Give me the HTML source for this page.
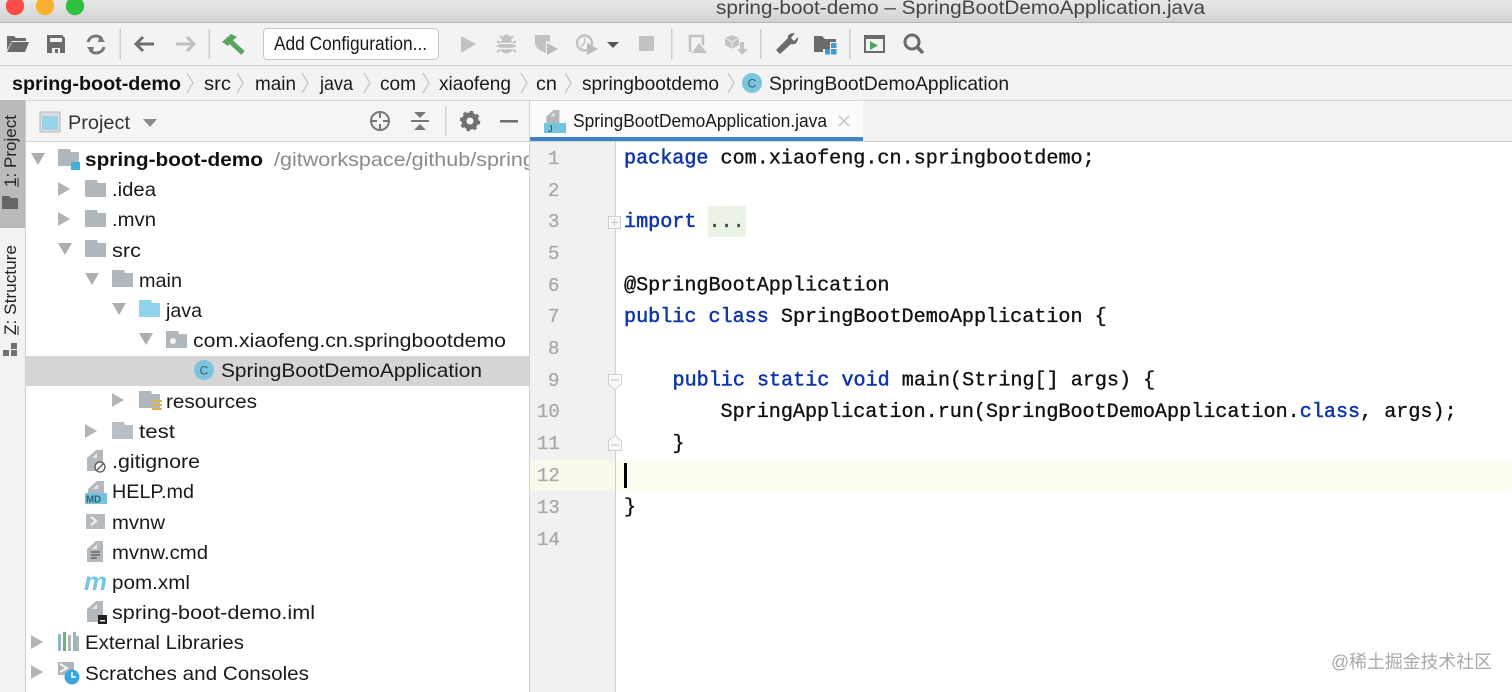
<!DOCTYPE html>
<html><head><meta charset="utf-8"><style>
html,body{margin:0;padding:0;background:#fff;overflow:hidden}
svg{display:block}
text{font-family:"Liberation Sans",sans-serif;font-size:19.5px;fill:#1a1a1a;white-space:pre}
.m{font-family:"Liberation Mono",monospace;font-size:20.13px;fill:#111;font-weight:400;stroke:#111;stroke-width:.35px}
.k{fill:#0e35a8;stroke:#0e35a8;stroke-width:.5px}
.n{font-family:"Liberation Mono",monospace;font-size:19px;fill:#a8a8a8;stroke:#a8a8a8;stroke-width:.3px}
.b{font-weight:700;fill:#111}
</style></head><body>
<svg width="1512" height="692" viewBox="0 0 1512 692" xmlns="http://www.w3.org/2000/svg">
<defs>
<linearGradient id="tg" x1="0" y1="0" x2="0" y2="1"><stop offset="0" stop-color="#e9e9e9"/><stop offset="1" stop-color="#d2d2d2"/></linearGradient>
<symbol id="fold" viewBox="0 0 21 17" overflow="visible"><path d="M0 0H12L13 3H21V17H0Z"/></symbol>
<symbol id="tri" viewBox="0 0 14 14" overflow="visible"><path d="M0 0H14L7 12Z" fill="#aeaeae"/></symbol>
<symbol id="trr" viewBox="0 0 14 14" overflow="visible"><path d="M0 0L12 7L0 14Z" fill="#b4b4b4"/></symbol>
<symbol id="doc" viewBox="0 0 20 22" overflow="visible"><path d="M0 8L9 0H16V21H0Z" fill="#b3b8bc"/><path d="M5 8L10 3V8Z" fill="#e8e8e8"/></symbol>
</defs>

<!-- backgrounds -->
<rect width="1512" height="692" fill="#fff"/>
<rect width="1512" height="22" fill="url(#tg)"/>
<rect y="22" width="1512" height="1" fill="#b5b5b5"/>
<rect y="23" width="1512" height="77" fill="#f3f3f3"/>
<rect y="65" width="1512" height="1" fill="#d4d4d4"/>
<rect y="100" width="1512" height="1" fill="#d4d4d4"/>
<rect y="101" width="25" height="591" fill="#f2f2f2"/>
<rect y="100" width="25" height="128" fill="#bababa"/>
<rect x="25" y="100" width="1" height="592" fill="#cfcfcf"/>
<rect x="26" y="101" width="503" height="40" fill="#f5f5f5"/>
<rect x="26" y="141" width="503" height="1" fill="#d6d6d6"/>
<rect x="26" y="356" width="503" height="30" fill="#d5d5d5"/>

<!-- traffic lights -->
<circle cx="15" cy="6" r="9.200" fill="#fb4c4a"/>
<circle cx="45" cy="6" r="9.200" fill="#f9b02e"/>
<circle cx="75" cy="6" r="9.200" fill="#2fc13f"/>
<text x="716" y="14" textLength="489" lengthAdjust="spacingAndGlyphs" style="fill:#444">spring-boot-demo – SpringBootDemoApplication.java</text>

<!-- toolbar left -->
<path d="M7 36H14L16 38H26V41H12L7 50ZM12 42H29L25 52H7Z" fill="#6b6b6b"/>
<path d="M47 35H62L65 38V53H47Z" fill="#6b6b6b"/><rect x="50" y="38" width="12" height="4" fill="#f3f3f3"/><rect x="52" y="48" width="8" height="5" fill="#f3f3f3"/><rect x="55" y="49" width="3" height="4" fill="#6b6b6b"/>
<path d="M88 42A8 8 0 0 1 102 39M104 47A8 8 0 0 1 90 50" fill="none" stroke="#777" stroke-width="3"/><path d="M100 35L105 42H98ZM92 54L87 47H94Z" fill="#777"/>
<rect x="119.500" y="29" width="1.500" height="30" fill="#cfcfcf"/>
<path d="M154 44H136M143 37L136 44L143 51" fill="none" stroke="#6e6e6e" stroke-width="3"/>
<path d="M176 44H194M187 37L194 44L187 51" fill="none" stroke="#c0c0c0" stroke-width="3"/>
<rect x="208.500" y="29" width="1.500" height="30" fill="#cfcfcf"/>
<path d="M222 42L231 34L237 37L232 41L228 46Z" fill="#58a55c"/><path d="M231 42L243 53" stroke="#58a55c" stroke-width="5"/>
<rect x="263.500" y="28.500" width="175" height="31" rx="4" fill="#fff" stroke="#c9c9c9"/>
<text x="274" y="50" textLength="153" lengthAdjust="spacingAndGlyphs">Add Configuration...</text>

<!-- toolbar gray -->
<path d="M461 36L476 44L461 53Z" fill="#c2c2c2"/>
<path d="M500 36L503 39M513 36L510 39" stroke="#c2c2c2" stroke-width="2"/>
<ellipse cx="506.500" cy="46" rx="7" ry="7.500" fill="#c2c2c2"/><circle cx="506.500" cy="39" r="4.500" fill="#c2c2c2"/>
<path d="M497 41L500 43M516 41L513 43M497 46H500M516 46H513M497 52L500 50M516 52L513 50" stroke="#c2c2c2" stroke-width="2"/>
<path d="M500 43.500H513M500 48.500H513" stroke="#f3f3f3" stroke-width="1.500"/>
<path d="M535 35H550V42L546 41V53L541 51C537 49 535 46 535 42Z" fill="#c2c2c2"/><path d="M547 43L558 49L547 55Z" fill="#bbb"/>
<circle cx="584.500" cy="43" r="7.500" fill="none" stroke="#c2c2c2" stroke-width="2.500"/><path d="M584.500 38V43L581 47" fill="none" stroke="#c2c2c2" stroke-width="1.500"/><path d="M587 43L598 49L587 55Z" fill="#bbb"/>
<path d="M607 42H619L613 48Z" fill="#555"/>
<rect x="639" y="36" width="15" height="15" fill="#c2c2c2"/>
<rect x="671" y="29" width="1.500" height="30" fill="#cfcfcf"/>
<path d="M690 52V36H703V45" fill="none" stroke="#c2c2c2" stroke-width="2.500"/><path d="M699 43L707 53H692Z" fill="#c2c2c2"/>
<path d="M725 38L732 35L739 38V45L732 49L725 45Z" fill="#c2c2c2"/><path d="M732 42V49M725 38L732 42L739 38" fill="none" stroke="#f3f3f3"/><path d="M740 42H744V49H748L742 55L737 49H740Z" fill="#c2c2c2"/>
<rect x="760" y="29" width="1.500" height="30" fill="#cfcfcf"/>
<path d="M776 50L788 38C787 35 790 33 795 33L791 38L794 41L798 37C798 43 795 45 791 44L780 54Z" fill="#6b6b6b"/>
<path d="M814 36H822L825 39H836V42H823V52H814Z" fill="#6b6b6b"/><rect x="823" y="42" width="7" height="7" fill="#6b6b6b"/>
<rect x="825" y="49" width="5" height="5.500" fill="#3d9ad1"/><rect x="831" y="49" width="5.500" height="5.500" fill="#3d9ad1"/><rect x="831" y="43" width="5.500" height="5" fill="#3d9ad1"/>
<rect x="849" y="29" width="1.500" height="30" fill="#cfcfcf"/>
<rect x="865" y="36" width="19" height="16" fill="none" stroke="#6b6b6b" stroke-width="2"/><rect x="864" y="35" width="21" height="4" fill="#6b6b6b"/><path d="M870 41L878 45.500L870 50Z" fill="#4fa65c"/>
<circle cx="912" cy="42" r="7" fill="none" stroke="#6b6b6b" stroke-width="3"/><path d="M917 47L923 53" stroke="#6b6b6b" stroke-width="3.500"/>

<!-- breadcrumbs -->
<g fill="none" stroke="#c6c6c6" stroke-width="1.300">
<path d="M187 73L193 83L187 93M237 73L243 83L237 93M302 73L308 83L302 93M364 73L370 83L364 93M423 73L429 83L423 93M521 73L527 83L521 93M565 73L571 83L565 93M728 73L734 83L728 93"/>
</g>
<text class="b" x="12" y="90" textLength="169" lengthAdjust="spacingAndGlyphs">spring-boot-demo</text>
<text x="204" y="90" textLength="27" lengthAdjust="spacingAndGlyphs">src</text>
<text x="255" y="90" textLength="41" lengthAdjust="spacingAndGlyphs">main</text>
<text x="320" y="90" textLength="33" lengthAdjust="spacingAndGlyphs">java</text>
<text x="380" y="90" textLength="36" lengthAdjust="spacingAndGlyphs">com</text>
<text x="439" y="90" textLength="72" lengthAdjust="spacingAndGlyphs">xiaofeng</text>
<text x="536" y="90" textLength="21" lengthAdjust="spacingAndGlyphs">cn</text>
<text x="582" y="90" textLength="137" lengthAdjust="spacingAndGlyphs">springbootdemo</text>
<circle cx="752" cy="83" r="10" fill="#7cc5de"/>
<text x="752" y="87.500" text-anchor="middle" style="font-size:12px;fill:#3d5a68">C</text>
<text x="769" y="90" textLength="240" lengthAdjust="spacingAndGlyphs">SpringBootDemoApplication</text>

<!-- side tabs -->
<text transform="translate(16,187) rotate(-90)" textLength="72" lengthAdjust="spacingAndGlyphs" style="font-size:17px;fill:#222">1: Project</text>
<rect x="17.500" y="178" width="1" height="9" fill="#222"/>
<path d="M2 196H9L11 198H18V209H2Z" fill="#666"/>
<text transform="translate(16,335) rotate(-90)" textLength="90" lengthAdjust="spacingAndGlyphs" style="font-size:17px;fill:#222">Z: Structure</text>
<rect x="17.500" y="326" width="1" height="9" fill="#222"/>
<g fill="#6e7275"><rect x="3" y="350" width="6" height="6"/><rect x="11" y="343" width="6" height="6"/><rect x="11" y="350" width="6" height="6"/></g>

<!-- project header -->
<rect x="40" y="112" width="20" height="20" fill="#dcdcdc" stroke="#b8b8b8"/><rect x="42" y="116" width="16" height="14" fill="#97d4e8"/>
<text x="68" y="129" textLength="62" lengthAdjust="spacingAndGlyphs" style="fill:#333">Project</text>
<path d="M143 119H157L150 127Z" fill="#8a8a8a"/>
<circle cx="380" cy="121" r="9" fill="none" stroke="#787878" stroke-width="2"/><path d="M380 111V118M380 124V131M370 121H377M383 121H390" stroke="#787878" stroke-width="2"/>
<path d="M411 121H429" stroke="#787878" stroke-width="2"/><path d="M414 112H426L420 118ZM414 130H426L420 124Z" fill="#787878"/>
<rect x="445" y="106" width="1.500" height="30" fill="#d0d0d0"/>
<circle cx="470" cy="121" r="6" fill="none" stroke="#707070" stroke-width="5"/><circle cx="470" cy="121" r="9" fill="none" stroke="#707070" stroke-width="2.500" stroke-dasharray="3.500 3.500"/>
<rect x="500" y="120" width="18" height="2.500" fill="#707070"/>

<!-- tree arrows -->
<use href="#tri" x="31" y="153" width="14" height="14"/>
<use href="#trr" x="58" y="182" width="14" height="14"/>
<use href="#trr" x="58" y="212" width="14" height="14"/>
<use href="#tri" x="58" y="243" width="14" height="14"/>
<use href="#tri" x="85" y="273" width="14" height="14"/>
<use href="#tri" x="112" y="303" width="14" height="14"/>
<use href="#tri" x="139" y="333" width="14" height="14"/>
<use href="#trr" x="112" y="393" width="14" height="14"/>
<use href="#trr" x="85" y="424" width="14" height="14"/>
<use href="#trr" x="31" y="635" width="14" height="14"/>
<use href="#trr" x="31" y="665" width="14" height="14"/>

<!-- tree icons -->
<use href="#fold" x="58" y="149" width="21" height="17" fill="#b1b8bd"/>
<rect x="71" y="162" width="9" height="8" fill="#3fb0dc"/>
<use href="#fold" x="85" y="180" width="21" height="17" fill="#b1b8bd"/>
<use href="#fold" x="85" y="210" width="21" height="17" fill="#b1b8bd"/>
<use href="#fold" x="85" y="240" width="21" height="17" fill="#b1b8bd"/>
<use href="#fold" x="112" y="270" width="21" height="17" fill="#b1b8bd"/>
<use href="#fold" x="139" y="300" width="21" height="17" fill="#90d2ec"/>
<use href="#fold" x="166" y="331" width="21" height="17" fill="#b1b8bd"/>
<circle cx="173" cy="341" r="3" fill="#f5f5f5"/>
<circle cx="204" cy="370" r="10" fill="#7cc5de"/>
<text x="204" y="374.500" text-anchor="middle" style="font-size:12px;fill:#3d5a68">C</text>
<use href="#fold" x="139" y="391" width="21" height="17" fill="#b1b8bd"/>
<g fill="#e0b050"><rect x="152" y="400" width="10" height="2"/><rect x="152" y="404" width="10" height="2"/><rect x="152" y="408" width="10" height="2"/></g>
<use href="#fold" x="112" y="422" width="21" height="17" fill="#b8bfc4"/>
<use href="#doc" x="87" y="450" width="20" height="22"/>
<circle cx="100" cy="467" r="5" fill="#f5f5f5" stroke="#555" stroke-width="1.300"/><path d="M97 470L103 464" stroke="#555" stroke-width="1.300"/>
<use href="#doc" x="88" y="481" width="20" height="22"/>
<rect x="85" y="493" width="22" height="11" fill="#76c3dc"/><text x="86" y="502.500" textLength="15" lengthAdjust="spacingAndGlyphs" style="font-size:10px;font-weight:700;fill:#2a5f72">MD</text>
<rect x="86" y="514" width="19" height="15" fill="#b6bbbf"/><path d="M91 517L96 521L91 525" fill="none" stroke="#f5f5f5" stroke-width="2"/>
<use href="#doc" x="87" y="541" width="20" height="22"/>
<path d="M91 552H100M91 555H100M91 558H97" stroke="#555" stroke-width="1.200"/>
<text x="84" y="590" style="font-size:25px;font-weight:700;font-style:italic;fill:#74c6e6" textLength="23" lengthAdjust="spacingAndGlyphs">m</text>
<use href="#doc" x="87" y="601" width="20" height="22"/>
<rect x="98" y="615" width="9" height="9" fill="#222"/><rect x="100" y="620" width="5" height="1.500" fill="#eee"/>
<g><rect x="58" y="634" width="3" height="17" fill="#8fb8c8"/><rect x="63" y="632" width="3" height="19" fill="#6fb46f"/><rect x="68" y="635" width="3" height="16" fill="#b0b5b8"/><rect x="73" y="632" width="3" height="19" fill="#8fb8c8"/><rect x="76" y="636" width="3" height="15" fill="#b0b5b8"/></g>
<rect x="58" y="662" width="16" height="13" fill="#aeb5ba"/><path d="M60 664L67 668L60 672" fill="none" stroke="#f5f5f5" stroke-width="2"/>
<circle cx="72" cy="677" r="7.500" fill="#39a7de"/><path d="M72 672V677H76" fill="none" stroke="#fff" stroke-width="1.500"/>

<!-- tree text -->
<text class="b" x="85" y="166" textLength="178" lengthAdjust="spacingAndGlyphs">spring-boot-demo</text>
<text x="274" y="166" textLength="268" lengthAdjust="spacingAndGlyphs" style="fill:#8a8a8a">/gitworkspace/github/spring-</text>
<text x="112" y="196" textLength="44" lengthAdjust="spacingAndGlyphs">.idea</text>
<text x="112" y="226" textLength="44" lengthAdjust="spacingAndGlyphs">.mvn</text>
<text x="112" y="257" textLength="29" lengthAdjust="spacingAndGlyphs">src</text>
<text x="139" y="287" textLength="43" lengthAdjust="spacingAndGlyphs">main</text>
<text x="166" y="317" textLength="36" lengthAdjust="spacingAndGlyphs">java</text>
<text x="193" y="347" textLength="313" lengthAdjust="spacingAndGlyphs">com.xiaofeng.cn.springbootdemo</text>
<text x="221" y="377" textLength="261" lengthAdjust="spacingAndGlyphs">SpringBootDemoApplication</text>
<text x="166" y="408" textLength="91" lengthAdjust="spacingAndGlyphs">resources</text>
<text x="139" y="438" textLength="36" lengthAdjust="spacingAndGlyphs">test</text>
<text x="112" y="468" textLength="88" lengthAdjust="spacingAndGlyphs">.gitignore</text>
<text x="112" y="498" textLength="82" lengthAdjust="spacingAndGlyphs">HELP.md</text>
<text x="112" y="529" textLength="53" lengthAdjust="spacingAndGlyphs">mvnw</text>
<text x="112" y="559" textLength="96" lengthAdjust="spacingAndGlyphs">mvnw.cmd</text>
<text x="112" y="589" textLength="78" lengthAdjust="spacingAndGlyphs">pom.xml</text>
<text x="112" y="619" textLength="203" lengthAdjust="spacingAndGlyphs">spring-boot-demo.iml</text>
<text x="85" y="649" textLength="159" lengthAdjust="spacingAndGlyphs">External Libraries</text>
<text x="85" y="680" textLength="224" lengthAdjust="spacingAndGlyphs">Scratches and Consoles</text>

<!-- editor panels (over the clipped tree path) -->
<rect x="529" y="100" width="1" height="592" fill="#cfcfcf"/>
<rect x="530" y="101" width="982" height="40" fill="#f2f2f2"/>
<rect x="530" y="141" width="982" height="1" fill="#d4d4d4"/>
<rect x="530" y="101" width="333" height="36" fill="#fbfbfb"/>
<rect x="530" y="137" width="333" height="4" fill="#4083c9"/>
<rect x="530" y="142" width="85" height="550" fill="#f1f1f1"/>
<rect x="615" y="142" width="1" height="550" fill="#cfcfcf"/>
<rect x="530" y="460" width="85" height="31" fill="#f9f8ea"/>
<rect x="616" y="460" width="896" height="31" fill="#fdfcf0"/>

<!-- tab -->
<use href="#doc" x="546" y="110" width="17" height="18"/>
<rect x="544" y="123" width="22" height="10" fill="#76c3dc"/><text x="548" y="132" style="font-size:9px;fill:#1e4a5a">J</text>
<text x="573" y="127" textLength="254" lengthAdjust="spacingAndGlyphs" style="font-size:18px">SpringBootDemoApplication.java</text>
<path d="M839 116L849 126M849 116L839 126" stroke="#c4c4c4" stroke-width="1.500"/>

<!-- line numbers -->
<text class="n" x="548" y="164">1</text>
<text class="n" x="548" y="196">2</text>
<text class="n" x="548" y="227">3</text>
<text class="n" x="548" y="259">5</text>
<text class="n" x="548" y="291">6</text>
<text class="n" x="548" y="322">7</text>
<text class="n" x="548" y="354">8</text>
<text class="n" x="548" y="386">9</text>
<text class="n" x="537" y="417">10</text>
<text class="n" x="537" y="449">11</text>
<text class="n" x="537" y="481">12</text>
<text class="n" x="537" y="513">13</text>
<text class="n" x="537" y="545">14</text>

<!-- fold marks -->
<rect x="608.500" y="216.500" width="12" height="12" fill="#f8f8f8" stroke="#d0d0d0"/><path d="M611 222.500H618M614.500 219V226" stroke="#c4c4c4"/>
<path d="M608.500 374.500H621.500V384L615 390L608.500 384Z" fill="#f8f8f8" stroke="#d0d0d0"/><path d="M611 380H619" stroke="#c4c4c4"/>
<path d="M608.500 450.500H621.500V441L615 435L608.500 441Z" fill="#f8f8f8" stroke="#d0d0d0"/><path d="M611 445H619" stroke="#c4c4c4"/>

<!-- code -->
<rect x="708" y="206" width="38" height="31" fill="#eaf3e6"/>
<text class="m" x="624" y="163.500"><tspan class="k">package</tspan> com.xiaofeng.cn.springbootdemo;</text>
<text class="m" x="624" y="227"><tspan class="k">import</tspan> <tspan style="fill:#2f5a2f;stroke:#2f5a2f">...</tspan></text>
<text class="m" x="624" y="290.500">@SpringBootApplication</text>
<text class="m" x="624" y="322"><tspan class="k">public class</tspan> SpringBootDemoApplication {</text>
<text class="m" x="672.500" y="385.500"><tspan class="k">public static void</tspan> main(String[] args) {</text>
<text class="m" x="720.500" y="417">SpringApplication.run(SpringBootDemoApplication.<tspan class="k">class</tspan>, args);</text>
<text class="m" x="672.500" y="449">}</text>
<rect x="624" y="463" width="3" height="25" fill="#000"/>
<text class="m" x="624" y="512.500">}</text>

<!-- watermark -->
<text x="1331" y="668" textLength="161" lengthAdjust="spacingAndGlyphs" style="font-family:'Liberation Sans','Noto Sans CJK SC',sans-serif;font-size:18px;fill:#a9a9a9">@稀土掘金技术社区</text>
</svg>
</body></html>
